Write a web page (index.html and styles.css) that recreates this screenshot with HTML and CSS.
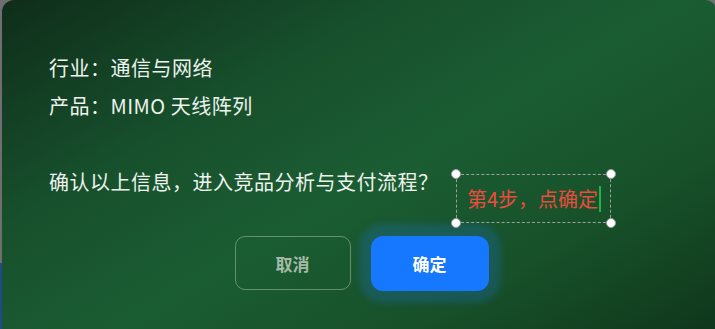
FILE: index.html
```html
<!DOCTYPE html>
<html lang="zh-CN">
<head>
    <meta charset="UTF-8">
    <meta name="viewport" content="width=device-width, initial-scale=1.0">
    <title>确认信息</title>
    <link rel="stylesheet" href="styles.css">
</head>
<body>
    <div class="dialog">
        <div class="info">
            <p class="row">行业：通信与网络</p>
            <p class="row">产品：MIMO 天线阵列</p>
        </div>
        <p class="question">确认以上信息，进入竞品分析与支付流程？</p>
        <div class="actions">
            <button class="cancel">取消</button>
            <button class="confirm">确定</button>
        </div>

        <div class="note">
            <span class="handle tl"></span>
            <span class="handle tr"></span>
            <span class="handle bl"></span>
            <span class="handle br"></span>
            <span class="note-text">第4步，点确定</span><span class="caret"></span>
        </div>
    </div>
</body>
</html>
```

FILE: styles.css
```css
html, body {
    margin: 0;
    padding: 0;
    height: 100%;
    overflow: hidden;
}

body {
    background: linear-gradient(to bottom, #6f6f6f 0, #6f6f6f 80%, #1f4b8c 80%);
    font-family: "Noto Sans CJK SC", "Noto Sans", sans-serif;
    color: #eef3ee;
}

.dialog {
    position: relative;
    box-sizing: border-box;
    margin-left: 2px;
    width: 715px;
    height: 345px;
    padding: 49px 0 0 47px;
    border-radius: 12px;
    background: linear-gradient(150deg, #0f2d1a 0%, #17502c 30%, #1b5d33 52%, #175029 75%, #0f351a 100%);
}

.info .row {
    margin: 0;
    font-size: 20px;
    letter-spacing: 0.5px;
    line-height: 38px;
}

.question {
    margin: 38px 0 0 0;
    font-size: 20px;
    letter-spacing: 0.5px;
    line-height: 38px;
}

.actions {
    display: flex;
    justify-content: center;
    gap: 20px;
    margin: 35px 0 0 -47px;
    padding-left: 4px;
}

.actions button {
    font-family: "Noto Sans CJK SC", sans-serif;
    font-weight: bold;
    font-size: 17px;
    cursor: pointer;
}

.actions .cancel {
    width: 116px;
    height: 54px;
    border: 1px solid rgba(255, 255, 255, 0.32);
    border-radius: 10px;
    background-color: transparent;
    color: #a7baa9;
}

.actions .confirm {
    width: 118px;
    height: 55px;
    border: none;
    border-radius: 12px;
    background-color: #1677ff;
    color: #ffffff;
    box-shadow: 0 0 6px 12px rgba(30, 110, 190, 0.3);
}

.note {
    position: absolute;
    left: 454px;
    top: 174px;
    width: 155px;
    height: 49px;
    box-sizing: border-box;
    border: 1px dashed #9aa29b;
    display: flex;
    align-items: center;
    padding-left: 10px;
}

.note-text {
    color: #ee4a3e;
    font-size: 20px;
    line-height: 24px;
}

.caret {
    width: 2px;
    height: 26px;
    margin-left: 1px;
    background-color: #22b24c;
}

.handle {
    position: absolute;
    width: 8px;
    height: 8px;
    border-radius: 50%;
    background-color: #ffffff;
    border: 1px solid #9a9a9a;
}

.handle.tl { left: -6px; top: -6px; }
.handle.tr { right: -6px; top: -6px; }
.handle.bl { left: -6px; bottom: -6px; }
.handle.br { right: -6px; bottom: -6px; }
```
